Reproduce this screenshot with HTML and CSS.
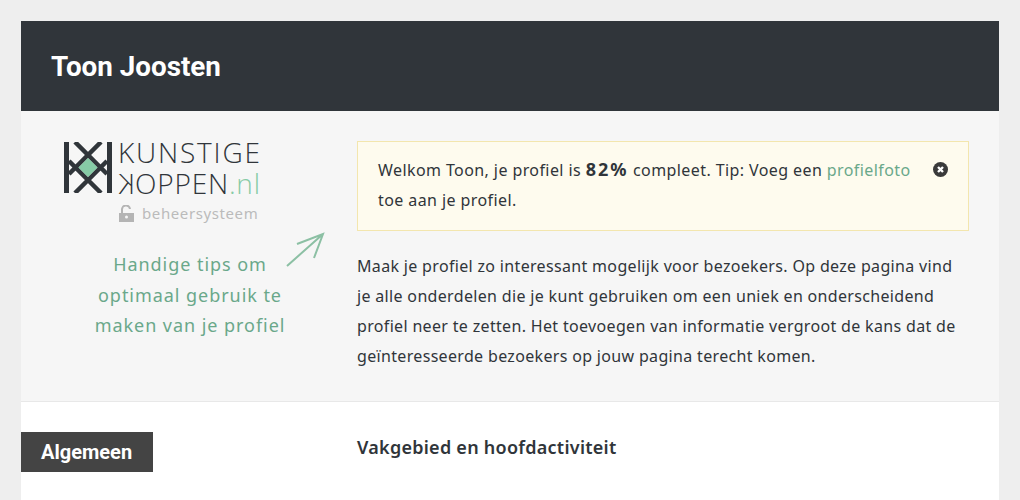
FILE: index.html
```html
<!DOCTYPE html>
<html lang="nl">
<head>
<meta charset="utf-8">
<title>Toon Joosten</title>
<link rel="stylesheet" href="styles.css">
</head>
<body>
<div class="page">
  <header class="topbar"><h1>Toon Joosten</h1></header>
  <section class="intro">
    <aside class="side">
      <div class="logo">
        <svg class="logo-mark" width="48" height="51" viewBox="0 0 48 51">
          <path d="M0 0h5v51H0zM43 0h5v51h-5z" fill="#30353a"/>
          <path d="M11 0 L43 32 M37 0 L5 32 M11 51 L43 19 M37 51 L5 19" fill="none" stroke="#30353a" stroke-width="4.500"/>
          <path d="M24 16 L33.500 25.500 L24 35 L14.500 25.500 Z" fill="#86cba6"/>
        </svg>
        <div class="logo-words">
          <div class="logo-line logo-top">KUNSTIGE</div>
          <div class="logo-line logo-bottom"><span class="mirror">K</span>OPPEN<span class="nl">.nl</span></div>
        </div>
      </div>
      <div class="system">
        <svg width="15" height="17" viewBox="0 0 15 17"><path d="M3 8V5a4 4 0 0 1 8-1" fill="none" stroke="#b4b4b4" stroke-width="2"/><path d="M0 8h15v9H0z" fill="#b4b4b4"/><circle cx="7.500" cy="12" r="1.500" fill="#f6f6f6"/></svg>
        <span>beheersysteem</span>
      </div>
      <div class="tip-wrap">
        <p class="tip">Handige tips om<br>optimaal gebruik te<br>maken van je profiel</p>
        <svg class="arrow" width="42" height="36" viewBox="0 0 42 36"><path d="M1 34 L37 2 M11 12 L37 2 L28 26" fill="none" stroke="#8cc0a4" stroke-width="2"/></svg>
      </div>
    </aside>
    <div class="main">
      <div class="notice">
        <p>Welkom Toon, je profiel is <strong>82%</strong> compleet. Tip: Voeg een <a href="#">profielfoto</a> toe aan je profiel.</p>
        <svg class="close" width="15" height="15" viewBox="0 0 15 15"><circle cx="7.500" cy="7.500" r="7.500" fill="#3a3a3a"/><path d="M5 5l5 5M10 5l-5 5" stroke="#fff" stroke-width="2.400"/></svg>
      </div>
      <p class="lead">Maak je profiel zo interessant mogelijk voor bezoekers. Op deze pagina vind je alle onderdelen die je kunt gebruiken om een uniek en onderscheidend profiel neer te zetten. Het toevoegen van informatie vergroot de kans dat de geïnteresseerde bezoekers op jouw pagina terecht komen.</p>
    </div>
  </section>
  <section class="form">
    <div class="tab">Algemeen</div>
    <h2>Vakgebied en hoofdactiviteit</h2>
  </section>
</div>
</body>
</html>
```
FILE: styles.css
```css
* { box-sizing: border-box; }
html, body { height: 100%; }
body { margin: 0; background: #eeeeee; overflow: hidden; font-family: "Noto Sans", sans-serif; color: #30353a; }
.page { margin: 21px 21px 0; background: #fff; height: 479px; }
.topbar { height: 90px; background: #30353a; display: flex; align-items: center; padding: 2px 0 0 30px; }
.topbar h1 { margin: 0; color: #fff; font: 700 27.800px/1 Roboto, sans-serif; }
.intro { height: 291px; background: #f6f6f6; border-bottom: 1px solid #e8e8e8; display: flex; padding: 30px 30px 0 0; }
.side { width: 336px; flex: none; padding: 1px 0 0 43px; }
.logo { display: flex; gap: 6px; }
.logo-mark { flex: none; }
.logo-words { margin-top: -4px; font: 300 28px/28px "Open Sans", sans-serif; color: #30353a; white-space: nowrap; }
.logo-line { height: 31px; }
.logo-top { letter-spacing: 1.800px; }
.logo-bottom { letter-spacing: 0.800px; }
.mirror { display: inline-block; transform: scaleX(-1); }
.nl { color: #86cba6; }
.system { display: flex; align-items: center; gap: 8px; margin: 4px 0 0 55px; color: #bbbbbb; font: 400 15px/18px "Noto Sans", sans-serif; letter-spacing: 0.600px; }
.tip-wrap { position: relative; margin-top: 27px; }
.tip { margin: 0; width: 252px; text-align: center; color: #6aa88a; font: 400 18px/30.500px "Noto Sans", sans-serif; letter-spacing: 0.950px; }
.arrow { position: absolute; left: 222px; top: -17px; }
.main { flex: 1; }
.notice { height: 90px; background: #fefbee; border: 1px solid #f3e6ae; padding: 13px 20px; display: flex; gap: 20px; align-items: flex-start; }
.notice p { margin: 0; font: 400 16px/30px "Noto Sans", sans-serif; letter-spacing: 0.410px; width: 535px; }
.notice strong { font-size: 18px; line-height: 1; letter-spacing: 2px; }
.notice a { color: #6aa88a; text-decoration: none; }
.close { flex: none; margin-top: 7px; }
.lead { margin: 20px 0 0; font: 400 16px/30px "Noto Sans", sans-serif; letter-spacing: 0.330px; }
.form { display: flex; padding-top: 30px; }
.tab { width: 132px; height: 40px; background: #444; color: #fff; font: 700 20px/40px Roboto, sans-serif; padding-left: 20px; }
h2 { margin: 0 0 0 204px; font: 600 18px/30px "Noto Sans", sans-serif; letter-spacing: 0.260px; color: #30353a; }
```
